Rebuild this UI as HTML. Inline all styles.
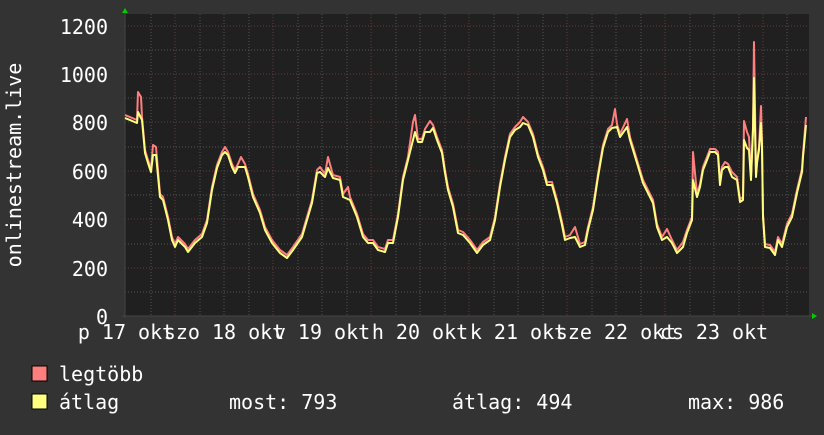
<!DOCTYPE html>
<html><head><meta charset="utf-8"><style>
html,body{margin:0;padding:0;background:#333;}
body{width:824px;height:430px;overflow:hidden;}
text{font-family:"DejaVu Sans Mono","Liberation Mono",monospace;fill:#fff;}
</style></head><body>
<svg width="824" height="430" viewBox="0 0 824 430" xmlns="http://www.w3.org/2000/svg">
<rect width="824" height="430" fill="#333"/>
<rect x="125" y="14" width="684" height="302" fill="#202020"/>
<g stroke-width="1" stroke-dasharray="1,2">
<g stroke="#555">
<path d="M125 50H809M125 98H809M125 147H809M125 195H809M125 244H809M125 292H809"/>
<path d="M151 14V316M200 14V316M224 14V316M249 14V316M298 14V316M322 14V316M347 14V316M396 14V316M420 14V316M445 14V316M494 14V316M518 14V316M543 14V316M592 14V316M616 14V316M641 14V316M690 14V316M714 14V316M739 14V316M787 14V316"/>
</g>
<g stroke="#6a3a3a">
<path d="M125 26H809M125 74H809M125 122H809M125 171H809M125 219H809M125 268H809"/>
<path d="M175 14V316M273 14V316M371 14V316M469 14V316M567 14V316M665 14V316M763 14V316"/>
</g>
</g>
<line x1="125" y1="12" x2="125" y2="318" stroke="#444"/>
<line x1="122" y1="316" x2="812" y2="316" stroke="#444"/>
<polygon points="122,13 125,8 128,13" fill="#0c0"/>
<polygon points="812,313 817,316 812,319" fill="#0c0"/>
<g fill="none" stroke-width="2" stroke-linejoin="round">
<polyline stroke="#ff7f7f" transform="translate(0,-3)" points="125,118 137,123 138,95 141,100 142,120 145,153 148,163 151,172 153,148 156,150 160,197 163,200 168,220 172,240 175,247 178,240 185,247 188,252 195,243 202,237 207,223 212,190 217,168 222,155 225,150 228,155 232,167 235,173 238,167 241,160 245,167 248,177 253,197 260,213 265,230 272,243 280,253 287,258 293,250 302,237 307,220 312,203 317,173 320,170 325,177 328,160 333,178 340,180 343,197 348,190 350,200 357,217 363,237 368,243 373,243 378,250 385,252 388,243 393,243 398,217 403,180 408,160 413,125 415,118 418,142 422,142 425,132 430,124 433,128 437,140 442,153 445,173 448,190 453,207 458,233 463,235 470,243 477,253 483,245 490,240 495,220 500,187 505,160 510,137 515,130 520,125 523,120 528,125 533,137 538,157 543,170 547,185 552,185 557,203 562,225 565,240 570,238 575,230 580,247 585,245 588,230 593,210 598,177 603,148 608,132 612,128 615,112 617,127 620,137 627,122 630,140 637,163 643,183 648,193 653,203 657,227 662,240 667,232 672,243 677,253 683,245 687,233 692,220 693,155 697,197 700,187 703,170 707,160 710,152 715,152 718,155 720,185 722,170 725,165 728,167 732,175 737,180 740,202 743,200 744,124 747,135 749,140 751,180 753,130 754,45 756,177 757,163 759,150 761,109 762,147 763,217 765,247 770,248 775,255 778,240 782,247 787,227 792,217 797,193 802,172 803,157 806,120"/>
<polyline stroke="#ffff7f" points="125,118 137,123 138,112 141,118 142,120 145,153 148,163 151,172 153,155 156,155 160,197 163,200 168,220 172,240 175,247 178,240 185,247 188,252 195,243 202,237 207,223 212,190 217,168 222,155 225,152 228,155 232,167 235,173 238,167 245,167 248,177 253,197 260,213 265,230 272,243 280,253 287,258 293,250 302,237 307,220 312,203 317,173 320,172 325,177 328,168 333,178 340,180 343,197 350,200 357,217 363,237 368,243 373,243 378,250 385,252 388,243 393,243 398,217 403,180 408,160 413,140 415,132 418,142 422,142 425,132 430,132 433,128 437,140 442,153 445,173 448,190 453,207 458,233 463,235 470,243 477,253 483,245 490,240 495,220 500,187 505,160 510,137 515,130 520,127 523,123 528,125 533,137 538,157 543,170 547,185 552,185 557,203 562,225 565,240 570,238 575,237 580,247 585,245 588,230 593,210 598,177 603,148 608,132 612,128 617,127 620,137 627,127 630,140 637,163 643,183 648,193 653,203 657,227 662,240 667,237 672,243 677,253 683,247 687,233 692,220 693,180 697,197 700,187 703,170 707,160 710,152 715,152 718,155 720,185 722,170 725,167 728,167 732,177 737,180 740,202 743,200 744,140 747,148 749,150 751,180 753,130 754,78 756,177 757,163 759,150 761,123 762,147 763,217 765,247 770,248 775,255 778,240 782,247 787,227 792,217 797,193 802,172 803,157 806,125"/>
</g>
<g font-size="20" text-anchor="end">
<text x="108" y="34">1200</text>
<text x="108" y="82">1000</text>
<text x="108" y="130">800</text>
<text x="108" y="179">600</text>
<text x="108" y="227">400</text>
<text x="108" y="276">200</text>
<text x="108" y="324">0</text>
</g>
<text transform="translate(21,165) rotate(-90)" font-size="20" text-anchor="middle">onlinestream.live</text>
<g font-size="20" text-anchor="middle">
<text x="126" y="339">p 17 okt</text>
<text x="224" y="339">szo 18 okt</text>
<text x="322" y="339">v 19 okt</text>
<text x="420" y="339">h 20 okt</text>
<text x="518" y="339">k 21 okt</text>
<text x="616" y="339">sze 22 okt</text>
<text x="714" y="339">cs 23 okt</text>
</g>
<rect x="32" y="366" width="15" height="15" fill="#ff7f7f" stroke="#000"/>
<rect x="32" y="394" width="15" height="15" fill="#ffff7f" stroke="#000"/>
<g font-size="20">
<text x="59" y="381">legtöbb</text>
<text x="59" y="409">átlag</text>
<text x="229" y="409">most: 793</text>
<text x="452" y="409">átlag: 494</text>
<text x="688" y="409">max: 986</text>
</g>
</svg>
</body></html>
